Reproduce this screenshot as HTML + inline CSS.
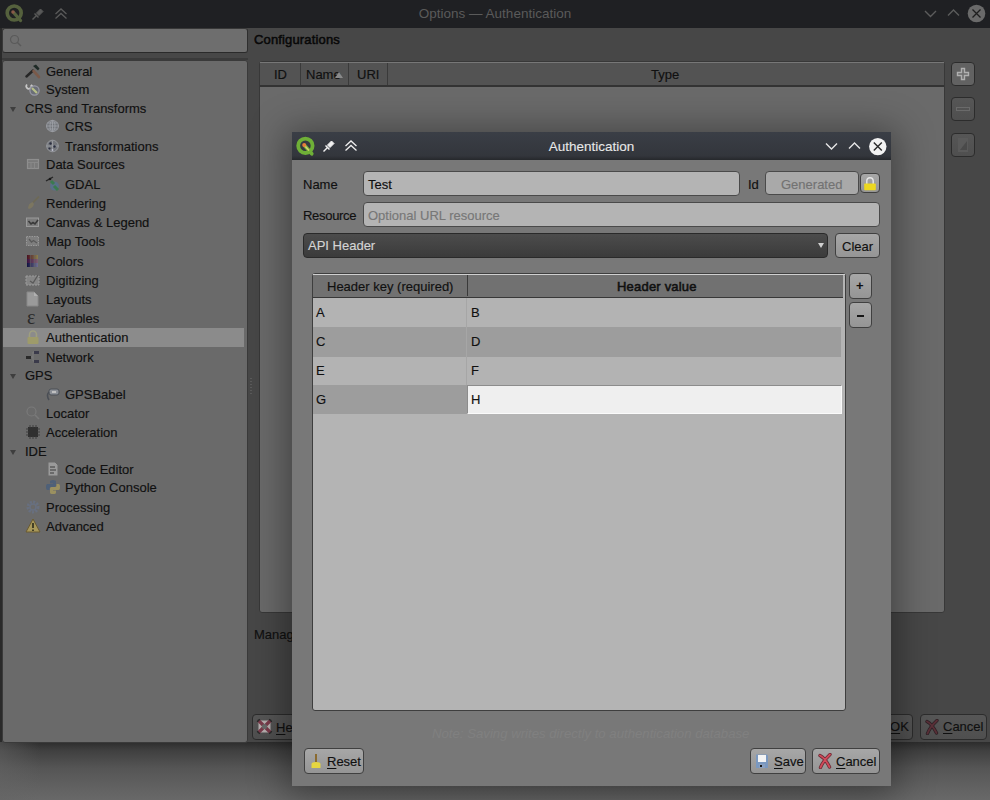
<!DOCTYPE html>
<html><head><meta charset="utf-8">
<style>
*{box-sizing:border-box;margin:0;padding:0}
html,body{width:990px;height:800px;overflow:hidden;background:#4a4a4a;font-family:"Liberation Sans",sans-serif;font-size:13px;color:#101010}
.a{position:absolute}
svg.a{display:block}
.t{position:absolute;white-space:nowrap;line-height:16px;-webkit-text-stroke:0.15px currentColor}
.btn{position:absolute;border:1px solid #2c2c2c;border-radius:4px;background:linear-gradient(#565656,#4f4f4f)}
.dbtn{position:absolute;border:1px solid #404040;border-radius:4px;background:linear-gradient(#a7a7a7,#959595)}
.inp{position:absolute;border:1px solid #4a4a4a;border-radius:4px;background:#b4b4b4}
.u{text-decoration:underline;text-decoration-thickness:1px;text-underline-offset:2px}
</style></head><body>
<!-- main window body -->
<div class="a" style="left:0;top:28px;width:990px;height:714px;background:#474747"></div>
<!-- desktop below -->
<div class="a" style="left:0;top:742px;width:990px;height:58px;background:linear-gradient(#2c2c2c,#404040 15%,#555 45%,#626262 80%,#686868)"></div>
<div class="a" style="left:0;top:742px;width:40px;height:58px;background:linear-gradient(90deg,rgba(100,100,100,0.5),rgba(100,100,100,0))"></div>
<!-- main title -->
<div class="a" style="left:0;top:0;width:990px;height:28px;background:#1f2023"></div>
<div class="t" style="left:0;width:990px;text-align:center;top:6px;color:#5a5a5a;font-size:13.5px;-webkit-text-stroke:0">Options — Authentication</div>
<svg class="a" style="left:4px;top:3px" width="22" height="22" viewBox="0 0 22 22"><circle cx="10.2" cy="10" r="7" fill="none" stroke="#55613d" stroke-width="3.6"/><path d="M10 10 L16.5 17.5" stroke="#55613d" stroke-width="3.4" stroke-linecap="round"/><circle cx="9" cy="9" r="1.8" fill="#8a5a48"/></svg>
<svg class="a" style="left:31px;top:7px" width="14" height="14" viewBox="0 0 14 14"><path d="M1.5 12.5 L6 8" stroke="#585858" stroke-width="1.5"/><path d="M3.5 6.5 L7.5 10.5" stroke="#585858" stroke-width="1.5"/><path d="M5.5 6 L9.5 2 L12 4.5 L8 8.5 Z" fill="#585858" stroke="#585858" stroke-width="1"/></svg>
<svg class="a" style="left:54px;top:7px" width="14" height="14" viewBox="0 0 14 14"><path d="M1.5 7 L7 2 L12.5 7 M1.5 11.5 L7 6.5 L12.5 11.5" stroke="#5a5a5a" stroke-width="1.3" fill="none"/></svg>
<svg class="a" style="left:924px;top:9px" width="13" height="9" viewBox="0 0 13 9"><path d="M1 2 L6.5 7.5 L12 2" stroke="#5c5c5c" stroke-width="1.4" fill="none"/></svg>
<svg class="a" style="left:947px;top:8px" width="13" height="9" viewBox="0 0 13 9"><path d="M1 7.5 L6.5 2 L12 7.5" stroke="#5c5c5c" stroke-width="1.4" fill="none"/></svg>
<svg class="a" style="left:966px;top:3px" width="21" height="21" viewBox="0 0 21 21"><circle cx="10.5" cy="10.5" r="8.8" fill="#6a6a6a"/><path d="M6.5 6.5 L14.5 14.5 M14.5 6.5 L6.5 14.5" stroke="#1e1e1e" stroke-width="1.3"/></svg>

<div class="a" style="left:0;top:28px;width:2px;height:714px;background:#2a2a2a"></div>
<!-- search -->
<div class="a" style="left:2px;top:28px;width:246px;height:25px;background:#6e6e6e;border:1px solid #383838;border-bottom-color:#2a2a2a;border-right-color:#2e2e2e;border-radius:3px"></div>
<div class="a" style="left:2px;top:58px;width:246px;height:2px;background:#3a3a3a"></div>
<svg class="a" style="left:9px;top:34px" width="14" height="14" viewBox="0 0 14 14"><circle cx="5.5" cy="5.5" r="4" fill="none" stroke="#5a5a5a" stroke-width="1.2"/><path d="M8.5 8.5 L12 12" stroke="#5a5a5a" stroke-width="1.5"/></svg>
<!-- tree panel -->
<div class="a" style="left:2px;top:60px;width:246px;height:683px;background:#6a6a6a;border:1px solid #3a3a3a;border-radius:3px"></div>
<div class="a" style="left:3px;top:328px;width:241px;height:19px;background:#8b8b8b"></div>
<div class="a" style="left:25px;top:63px;width:16px;height:16px"><svg width="16" height="16" viewBox="0 0 16 16"><path d="M1.5 13.5 L8 7.5" stroke="#262626" stroke-width="2.4" stroke-linecap="round"/><path d="M8 3 L11 1.5 L14.5 5.5 L13 7.5 Z" fill="#1e2a26"/><path d="M8.5 8 L14 14" stroke="#7a5a4a" stroke-width="2.6" stroke-linecap="round"/></svg></div>
<div class="t tx" style="left:46px;top:64px">General</div>
<div class="a" style="left:25px;top:81px;width:16px;height:16px"><svg width="16" height="16" viewBox="0 0 16 16"><path d="M2 3.5 A2.5 2.5 0 1 0 6 4 L9 7" stroke="#c8c8c8" stroke-width="1.8" fill="none"/><circle cx="9.5" cy="9.5" r="4.6" fill="#6a6e78" stroke="#9a9aa8" stroke-width="1.2"/><path d="M7 7 L12 12" stroke="#b8c088" stroke-width="2.2"/></svg></div>
<div class="t tx" style="left:46px;top:82px">System</div>
<svg class="a" style="left:10px;top:107px" width="6" height="5"><path d="M0 0 H6 L3 5 Z" fill="#3e3e3e"/></svg>
<div class="t tx" style="left:25px;top:101px">CRS and Transforms</div>
<div class="a" style="left:45px;top:118px;width:16px;height:16px"><svg width="16" height="16" viewBox="0 0 16 16"><ellipse cx="7.5" cy="8" rx="6" ry="5.6" fill="#74777c" stroke="#9a9ca2" stroke-width="0.9"/><path d="M1.5 8 H13.5 M2.5 5 H12.5 M2.5 11 H12.5 M7.5 2.5 V13.5" stroke="#9fa2a8" stroke-width="0.8"/><ellipse cx="7.5" cy="8" rx="2.5" ry="5.6" fill="none" stroke="#9fa2a8" stroke-width="0.8"/></svg></div>
<div class="t tx" style="left:65px;top:119px">CRS</div>
<div class="a" style="left:45px;top:138px;width:16px;height:16px"><svg width="16" height="16" viewBox="0 0 16 16"><circle cx="7.5" cy="8" r="5.8" fill="#74777c" stroke="#9a9ca2" stroke-width="0.9"/><path d="M1.5 8 H13.5 M7.5 2.5 V13.5" stroke="#9fa2a8" stroke-width="0.8"/><circle cx="5.5" cy="5.5" r="1.2" fill="#2a2e40"/><circle cx="9.5" cy="8.5" r="1.2" fill="#2a2e40"/><circle cx="4.5" cy="10.5" r="1.1" fill="#2a2e40"/><circle cx="7.5" cy="12" r="0.9" fill="#c0c0d0"/></svg></div>
<div class="t tx" style="left:65px;top:139px">Transformations</div>
<div class="a" style="left:25px;top:156px;width:16px;height:16px"><svg width="16" height="16" viewBox="0 0 16 16"><rect x="2.5" y="3.5" width="11" height="9" fill="#7a7a7a" stroke="#8e8e8e" stroke-width="1.2"/><path d="M2.5 6.5 H13.5 M6 6.5 V12.5 M9.5 6.5 V12.5" stroke="#8a8a8a" stroke-width="0.9"/></svg></div>
<div class="t tx" style="left:46px;top:157px">Data Sources</div>
<div class="a" style="left:45px;top:176px;width:16px;height:16px"><svg width="16" height="16" viewBox="0 0 16 16"><circle cx="9.5" cy="10" r="4.5" fill="#5a7088"/><path d="M1 5 L8 1" stroke="#262626" stroke-width="1.4"/><circle cx="5" cy="3" r="1.3" fill="#1a1a1a"/><path d="M6 5 L9 8 M9 10 L13 14" stroke="#3a7a50" stroke-width="3"/></svg></div>
<div class="t tx" style="left:65px;top:177px">GDAL</div>
<div class="a" style="left:25px;top:195px;width:16px;height:16px"><svg width="16" height="16" viewBox="0 0 16 16"><path d="M14 1.5 L8 7.5" stroke="#6e6a58" stroke-width="1.8"/><path d="M3 13 Q3.5 8.5 7.5 7 L9 9 Q8 13 4 14 Z" fill="#7c7660"/></svg></div>
<div class="t tx" style="left:46px;top:196px">Rendering</div>
<div class="a" style="left:25px;top:214px;width:16px;height:16px"><svg width="16" height="16" viewBox="0 0 16 16"><rect x="1.5" y="4" width="12" height="8.5" fill="#7c7c7c" stroke="#9a9a9a" stroke-width="1"/><path d="M3.5 7 L6 10 L8 8.5 L10 10 L13 6" stroke="#3a3a3a" stroke-width="1.6" fill="none"/></svg></div>
<div class="t tx" style="left:46px;top:215px">Canvas &amp; Legend</div>
<div class="a" style="left:25px;top:233px;width:16px;height:16px"><svg width="16" height="16" viewBox="0 0 16 16"><rect x="1.5" y="3.5" width="12" height="9" fill="#7e7e7e" stroke="#999" stroke-width="1" stroke-dasharray="1.5 1"/><path d="M4 6 L6.5 9 L8.5 7.5 L12 10" stroke="#5a5a5a" stroke-width="1.3" fill="none"/></svg></div>
<div class="t tx" style="left:46px;top:234px">Map Tools</div>
<div class="a" style="left:25px;top:253px;width:16px;height:16px"><svg width="16" height="16" viewBox="0 0 16 16"><defs><linearGradient id="cg1"><stop offset="0" stop-color="#4a1020"/><stop offset="1" stop-color="#8a8050"/></linearGradient><linearGradient id="cg2"><stop offset="0" stop-color="#3a1040"/><stop offset="1" stop-color="#806070"/></linearGradient><linearGradient id="cg3"><stop offset="0" stop-color="#101040"/><stop offset="1" stop-color="#707090"/></linearGradient></defs><rect x="2" y="2" width="11" height="4" fill="url(#cg1)"/><rect x="2" y="6" width="11" height="4" fill="url(#cg2)"/><rect x="2" y="10" width="11" height="4" fill="url(#cg3)"/><path d="M5.7 2 V14 M9.3 2 V14" stroke="#6a6a6a" stroke-width="0.6"/></svg></div>
<div class="t tx" style="left:46px;top:254px">Colors</div>
<div class="a" style="left:25px;top:272px;width:16px;height:16px"><svg width="16" height="16" viewBox="0 0 16 16"><rect x="1" y="4" width="13" height="9" fill="#858585" stroke="#9c9c9c" stroke-width="1" stroke-dasharray="2 1"/><path d="M5 9 L8 11 L13 3" stroke="#5a5a5a" stroke-width="1.3" fill="none"/></svg></div>
<div class="t tx" style="left:46px;top:273px">Digitizing</div>
<div class="a" style="left:25px;top:291px;width:16px;height:16px"><svg width="16" height="16" viewBox="0 0 16 16"><path d="M2 1 H9 L13 5 V15 H2 Z" fill="#9a9a9a" stroke="#888" stroke-width="1"/><path d="M9 1 V5 H13" fill="#b0b0b0"/></svg></div>
<div class="t tx" style="left:46px;top:292px">Layouts</div>
<div class="a" style="left:25px;top:310px;width:16px;height:16px"><svg width="16" height="16" viewBox="0 0 16 16"><text x="2" y="14" font-family="Liberation Serif" font-size="20" fill="#2a2a2a">&#949;</text></svg></div>
<div class="t tx" style="left:46px;top:311px">Variables</div>
<div class="a" style="left:25px;top:329px;width:16px;height:16px"><svg width="16" height="16" viewBox="0 0 16 16"><path d="M4.5 8 V5.5 A3.5 3.5 0 0 1 11.5 5.5 V8" stroke="#9e9e80" stroke-width="1.6" fill="none"/><rect x="2.5" y="8" width="11" height="7" rx="1" fill="#9e9b6a"/></svg></div>
<div class="t tx" style="left:46px;top:330px">Authentication</div>
<div class="a" style="left:25px;top:349px;width:16px;height:16px"><svg width="16" height="16" viewBox="0 0 16 16"><rect x="1" y="7" width="5" height="3" fill="#2a2a2a"/><rect x="9" y="2" width="5" height="3" fill="#3a3a4a"/><rect x="9" y="11" width="5" height="3" fill="#3a3a4a"/><path d="M6 8 H8 V3 H9 M8 8 V12 H9" stroke="#7a7a7a" fill="none"/></svg></div>
<div class="t tx" style="left:46px;top:350px">Network</div>
<svg class="a" style="left:10px;top:374px" width="6" height="5"><path d="M0 0 H6 L3 5 Z" fill="#3e3e3e"/></svg>
<div class="t tx" style="left:25px;top:368px">GPS</div>
<div class="a" style="left:45px;top:386px;width:16px;height:16px"><svg width="16" height="16" viewBox="0 0 16 16"><rect x="4" y="3" width="10" height="6" rx="2" fill="#8a8e95" stroke="#4a4e55" stroke-width="1"/><path d="M4 6 Q1 9 4 14" stroke="#4a4e55" stroke-width="1.6" fill="none"/><rect x="7" y="5" width="4" height="2" fill="#c0c0c0"/></svg></div>
<div class="t tx" style="left:65px;top:387px">GPSBabel</div>
<div class="a" style="left:25px;top:405px;width:16px;height:16px"><svg width="16" height="16" viewBox="0 0 16 16"><circle cx="6.5" cy="6.5" r="4.5" fill="none" stroke="#7a7a7a" stroke-width="1.2"/><path d="M10 10 L14 14" stroke="#7a7a7a" stroke-width="1.6"/></svg></div>
<div class="t tx" style="left:46px;top:406px">Locator</div>
<div class="a" style="left:25px;top:424px;width:16px;height:16px"><svg width="16" height="16" viewBox="0 0 16 16"><rect x="3" y="3" width="10" height="10" fill="#2e2e2e"/><path d="M1 5 H15 M1 8 H15 M1 11 H15 M5 1 V15 M8 1 V15 M11 1 V15" stroke="#3a3a3a" stroke-width="0.9"/><rect x="4" y="4" width="8" height="8" fill="#303030"/></svg></div>
<div class="t tx" style="left:46px;top:425px">Acceleration</div>
<svg class="a" style="left:10px;top:450px" width="6" height="5"><path d="M0 0 H6 L3 5 Z" fill="#3e3e3e"/></svg>
<div class="t tx" style="left:25px;top:444px">IDE</div>
<div class="a" style="left:45px;top:461px;width:16px;height:16px"><svg width="16" height="16" viewBox="0 0 16 16"><path d="M3 1 H10 L13 4 V15 H3 Z" fill="#9a9a9a" stroke="#6a6a6a" stroke-width="1"/><path d="M5 6 H10 M5 9 H11 M5 12 H9" stroke="#3a3a3a" stroke-width="1"/></svg></div>
<div class="t tx" style="left:65px;top:462px">Code Editor</div>
<div class="a" style="left:45px;top:479px;width:16px;height:16px"><svg width="16" height="16" viewBox="0 0 16 16"><path d="M5 2.5 Q5 1 8 1 Q11 1 11 2.5 V6.5 Q11 8 9.5 8 H6 Q4.5 8 4.5 9.5 V11 H2.5 Q1 11 1 8 Q1 5 2.5 5 H8 V4.5 H5 Z" fill="#4e6078"/><path d="M11 13.5 Q11 15 8 15 Q5 15 5 13.5 V9.5 Q5 8 6.5 8 H10 Q11.5 8 11.5 6.5 V5 H13.5 Q15 5 15 8 Q15 11 13.5 11 H8 V11.5 H11 Z" fill="#9a9060"/></svg></div>
<div class="t tx" style="left:65px;top:480px">Python Console</div>
<div class="a" style="left:25px;top:499px;width:16px;height:16px"><svg width="16" height="16" viewBox="0 0 16 16"><circle cx="8" cy="8" r="5" fill="none" stroke="#687080" stroke-width="3" stroke-dasharray="2 1.3"/><circle cx="8" cy="8" r="3" fill="none" stroke="#687080" stroke-width="1.5"/></svg></div>
<div class="t tx" style="left:46px;top:500px">Processing</div>
<div class="a" style="left:25px;top:518px;width:16px;height:16px"><svg width="16" height="16" viewBox="0 0 16 16"><path d="M8 1 L15 14 H1 Z" fill="#a8985a" stroke="#6a5a30" stroke-width="1"/><path d="M8 5 V10 M8 11.5 V13" stroke="#2a2a1a" stroke-width="1.6"/></svg></div>
<div class="t tx" style="left:46px;top:519px">Advanced</div>
<!-- splitter dots -->
<div class="a" style="left:250px;top:378px;width:2px;height:16px;background:repeating-linear-gradient(#5a5a5a 0 1px,transparent 1px 3px)"></div>

<!-- configurations -->
<div class="t" style="left:254px;top:32px;color:#080808;-webkit-text-stroke:0.5px #080808;letter-spacing:0.15px">Configurations</div>
<div class="a" style="left:259px;top:61px;width:686px;height:552px;background:#6a6a6a;border:1px solid #383838;border-radius:3px"></div>
<div class="a" style="left:260px;top:62px;width:684px;height:1px;background:#777"></div>
<div class="a" style="left:260px;top:63px;width:684px;height:24px;background:#535353;border-bottom:2px solid #333"></div>
<div class="a" style="left:300px;top:63px;width:1px;height:22px;background:#3a3a3a"></div>
<div class="a" style="left:348px;top:63px;width:1px;height:22px;background:#3a3a3a"></div>
<div class="a" style="left:387px;top:63px;width:1px;height:22px;background:#3a3a3a"></div>
<div class="t" style="left:274px;top:67px">ID</div>
<div class="t" style="left:306px;top:67px">Name</div>
<div class="t" style="left:357px;top:67px">URI</div>
<div class="t" style="left:651px;top:67px">Type</div>
<svg class="a" style="left:335px;top:72px" width="8" height="6"><path d="M0 6 L4 0 L8 6 Z" fill="#8a8a8a"/></svg>
<div class="btn" style="left:951px;top:62px;width:24px;height:24px;background:#626262"></div>
<svg class="a" style="left:955px;top:66px" width="16" height="16" viewBox="0 0 16 16"><path d="M6.5 2.5 H9.5 V6.5 H13.5 V9.5 H9.5 V13.5 H6.5 V9.5 H2.5 V6.5 H6.5 Z" fill="#6e6e6e" stroke="#b0b0b0" stroke-width="1.4"/></svg>
<div class="btn" style="left:951px;top:97px;width:24px;height:24px"></div>
<div class="a" style="left:956px;top:107px;width:14px;height:4px;border:1px solid #6a6a6a"></div>
<div class="btn" style="left:951px;top:133px;width:24px;height:24px"></div>
<svg class="a" style="left:956px;top:137px" width="14" height="16" viewBox="0 0 14 16"><path d="M2 1 H12 V15 H2 Z" fill="#5a5a5a"/><path d="M4 13 L11 4 V13 Z" fill="#4a4a4a"/></svg>
<div class="t" style="left:254px;top:627px">Management</div>
<div class="btn" style="left:252px;top:714px;width:62px;height:26px"></div>
<svg class="a" style="left:256px;top:718px" width="17" height="17" viewBox="0 0 17 17"><rect x="2.5" y="2.5" width="12" height="12" rx="2" fill="#b8b0b0"/><path d="M2.5 2.5 L14.5 14.5 M14.5 2.5 L2.5 14.5" stroke="#7a3a4a" stroke-width="3.2"/><circle cx="8.5" cy="8.5" r="2.6" fill="#6a6a6a"/><path d="M1.5 4 A3 3 0 0 1 4 1.5 M13 1.5 A3 3 0 0 1 15.5 4 M15.5 13 A3 3 0 0 1 13 15.5 M4 15.5 A3 3 0 0 1 1.5 13" stroke="#2a2a2a" stroke-width="1.6" fill="none"/></svg>
<div class="t" style="left:276px;top:720px"><span class="u">H</span>elp</div>
<div class="btn" style="left:858px;top:714px;width:55px;height:26px"></div>
<div class="t" style="left:890px;top:719px"><span class="u">O</span>K</div>
<div class="btn" style="left:920px;top:714px;width:67px;height:26px"></div>
<svg class="a" style="left:924px;top:719px" width="16" height="16" viewBox="0 0 16 16"><path d="M3.5 14.5 Q6 8 13 1.5 M3 2.5 Q8 5 12.5 14" stroke="#2e2226" stroke-width="3.4" fill="none" stroke-linecap="round"/><path d="M3.5 14.5 Q6 8 13 1.5 M3 2.5 Q8 5 12.5 14" stroke="#5a3038" stroke-width="1.8" fill="none" stroke-linecap="round"/></svg>
<div class="t" style="left:943px;top:719px"><span class="u">C</span>ancel</div>

<!-- dialog -->
<div class="a" style="left:292px;top:132px;width:599px;height:654px;background:#787878;box-shadow:0 4px 34px 6px rgba(0,0,0,0.38)"></div>
<div class="a" style="left:292px;top:132px;width:599px;height:28px;background:linear-gradient(#3a3e46,#33363c 85%,#26282c)"></div>
<div class="t" style="left:292px;width:599px;text-align:center;top:139px;color:#e8e8e8;font-size:13.5px;-webkit-text-stroke:0.1px #e8e8e8">Authentication</div>
<svg class="a" style="left:295px;top:136px" width="22" height="22" viewBox="0 0 22 22"><circle cx="10.4" cy="9.8" r="7.2" fill="none" stroke="#6fb037" stroke-width="3.8"/><path d="M10 10 L16.8 17.8" stroke="#6fb037" stroke-width="3.6" stroke-linecap="round"/><path d="M9.5 9.5 L14 14.5" stroke="#d8d070" stroke-width="1.6"/><circle cx="9.2" cy="9" r="2" fill="#e8803a"/></svg>
<svg class="a" style="left:322px;top:139px" width="14" height="14" viewBox="0 0 14 14"><path d="M1.5 12.5 L6 8" stroke="#f0f0f0" stroke-width="1.5"/><path d="M3.5 6.5 L7.5 10.5" stroke="#f0f0f0" stroke-width="1.5"/><path d="M5.5 6 L9.5 2 L12 4.5 L8 8.5 Z" fill="#f0f0f0" stroke="#f0f0f0" stroke-width="1"/></svg>
<svg class="a" style="left:344px;top:139px" width="14" height="14" viewBox="0 0 14 14"><path d="M1.5 7 L7 2 L12.5 7 M1.5 11.5 L7 6.5 L12.5 11.5" stroke="#eeeeee" stroke-width="1.3" fill="none"/></svg>
<svg class="a" style="left:825px;top:142px" width="13" height="9" viewBox="0 0 13 9"><path d="M1 1.5 L6.5 7 L12 1.5" stroke="#e6e6e6" stroke-width="1.4" fill="none"/></svg>
<svg class="a" style="left:848px;top:141px" width="13" height="9" viewBox="0 0 13 9"><path d="M1 7.5 L6.5 2 L12 7.5" stroke="#e6e6e6" stroke-width="1.4" fill="none"/></svg>
<svg class="a" style="left:868px;top:137px" width="20" height="20" viewBox="0 0 20 20"><circle cx="9.8" cy="9.6" r="8.7" fill="#f2f2f2"/><path d="M5.8 5.6 L13.8 13.6 M13.8 5.6 L5.8 13.6" stroke="#2a2a2a" stroke-width="1.4"/></svg>

<div class="t" style="left:303px;top:177px">Name</div>
<div class="inp" style="left:363px;top:171px;width:377px;height:25px"></div>
<div class="t" style="left:368px;top:177px">Test</div>
<div class="t" style="left:748px;top:177px">Id</div>
<div class="inp" style="left:765px;top:171px;width:94px;height:24px;background:#a9a9a9"></div>
<div class="t" style="left:781px;top:177px;color:#727272">Generated</div>
<div class="dbtn" style="left:860px;top:173px;width:20px;height:20px"></div>
<svg class="a" style="left:863px;top:176px" width="14" height="16" viewBox="0 0 14 16"><path d="M3.8 8 V5 A3.2 3.2 0 0 1 10.2 5 V8" stroke="#e6e6e6" stroke-width="1.4" fill="none"/><rect x="1.2" y="7.5" width="11.6" height="6.8" rx="0.8" fill="#ecd820"/></svg>
<div class="t" style="left:303px;top:208px;letter-spacing:-0.3px">Resource</div>
<div class="inp" style="left:363px;top:202px;width:517px;height:25px"></div>
<div class="t" style="left:368px;top:208px;color:#777">Optional URL resource</div>
<div class="a" style="left:303px;top:233px;width:525px;height:25px;border:1px solid #2a2a2a;border-radius:4px;background:linear-gradient(#4c4c4c,#3b3b3b)"></div>
<div class="t" style="left:308px;top:238px;color:#d4d4d4;-webkit-text-stroke:0.15px #d4d4d4">API Header</div>
<svg class="a" style="left:818px;top:243px" width="6" height="5"><path d="M0 0 H6 L3 5 Z" fill="#d0d0d0"/></svg>
<div class="dbtn" style="left:835px;top:233px;width:45px;height:25px"></div>
<div class="t" style="left:842px;top:239px">Clear</div>

<div class="a" style="left:312px;top:273px;width:534px;height:438px;background:#b4b4b4;border:1px solid #3e3e3e;border-radius:3px"></div>
<div class="a" style="left:313px;top:274px;width:532px;height:1px;background:#d0d0d0"></div>
<div class="a" style="left:313px;top:275px;width:530px;height:23px;background:#717171;border-bottom:1px solid #383838"></div>
<div class="a" style="left:467px;top:275px;width:1px;height:21px;background:#3a3a3a"></div>
<div class="t" style="left:327px;top:279px">Header key (required)</div>
<div class="t" style="left:617px;top:279px;-webkit-text-stroke:0.55px #101010;letter-spacing:0.2px">Header value</div>
<div class="a" style="left:313px;top:298px;width:528px;height:29px;background:#b3b3b3"></div>
<div class="a" style="left:313px;top:327px;width:528px;height:30px;background:#9d9d9d"></div>
<div class="a" style="left:313px;top:357px;width:528px;height:28px;background:#b3b3b3"></div>
<div class="a" style="left:313px;top:385px;width:154px;height:29px;background:#9d9d9d"></div>
<div class="a" style="left:466px;top:298px;width:1px;height:87px;background:#a6a6a6"></div>
<div class="a" style="left:467px;top:385px;width:375px;height:29px;background:#efefef;border:1px solid #8c8c8c;border-right-color:#fafafa;border-bottom-color:#fafafa"></div>
<div class="t" style="left:316px;top:305px">A</div>
<div class="t" style="left:471px;top:305px">B</div>
<div class="t" style="left:316px;top:334px">C</div>
<div class="t" style="left:471px;top:334px">D</div>
<div class="t" style="left:316px;top:363px">E</div>
<div class="t" style="left:471px;top:363px">F</div>
<div class="t" style="left:316px;top:392px">G</div>
<div class="t" style="left:471px;top:392px">H</div>
<div class="dbtn" style="left:849px;top:273px;width:23px;height:26px"></div>
<div class="t" style="left:856px;top:278px;font-weight:bold;-webkit-text-stroke:0">+</div>
<div class="dbtn" style="left:849px;top:302px;width:23px;height:26px"></div>
<div class="a" style="left:857px;top:315px;width:7px;height:2px;background:#151515"></div>

<div class="t" style="left:432px;top:726px;color:#808080;font-style:italic;font-size:13.2px;-webkit-text-stroke:0">Note: Saving writes directly to authentication database</div>
<div class="dbtn" style="left:304px;top:748px;width:60px;height:26px"></div>
<svg class="a" style="left:310px;top:753px" width="12" height="16" viewBox="0 0 12 16"><rect x="5" y="1" width="2" height="8" fill="#8a6a30"/><path d="M1.5 15 V11 Q1.5 9 6 9 Q10.5 9 10.5 11 V15 Z" fill="#e6d640"/></svg>
<div class="t" style="left:327px;top:754px"><span class="u">R</span>eset</div>
<div class="dbtn" style="left:750px;top:748px;width:56px;height:26px"></div>
<svg class="a" style="left:755px;top:753px" width="14" height="16" viewBox="0 0 14 16"><path d="M1 1.5 H12 L13 2.5 V15 H1 Z" fill="#7a98c0"/><rect x="3" y="2" width="8" height="7" fill="#f4f4f4"/><rect x="4" y="11" width="6" height="4" fill="#8aa0c0"/><rect x="5" y="12" width="2" height="2" fill="#1a1a1a"/></svg>
<div class="t" style="left:774px;top:754px"><span class="u">S</span>ave</div>
<div class="dbtn" style="left:812px;top:748px;width:68px;height:26px"></div>
<svg class="a" style="left:817px;top:753px" width="16" height="16" viewBox="0 0 16 16"><path d="M3.5 14.5 Q6 8 13 1.5 M3 2.5 Q8 5 12.5 14" stroke="#6a2a34" stroke-width="3.4" fill="none" stroke-linecap="round"/><path d="M3.5 14.5 Q6 8 13 1.5 M3 2.5 Q8 5 12.5 14" stroke="#d04a5a" stroke-width="1.8" fill="none" stroke-linecap="round"/></svg>
<div class="t" style="left:836px;top:754px"><span class="u">C</span>ancel</div>
</body></html>
